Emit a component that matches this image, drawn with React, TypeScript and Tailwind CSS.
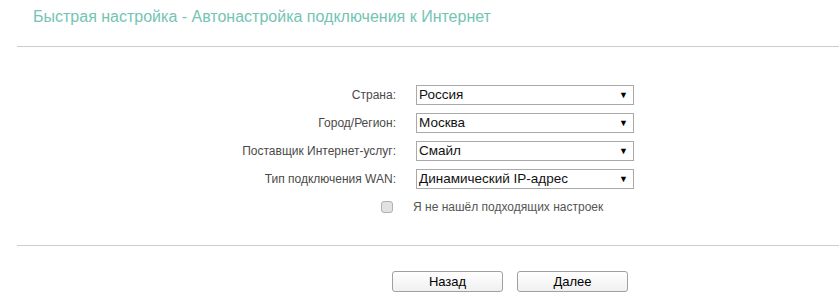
import React from "react";

const font = { fontFamily: '"Liberation Sans", Arial, sans-serif' };

function FakeSelect({ value }: { value: string }) {
  return (
    <div className="relative flex h-[20px] w-[218px] items-center border border-[#a9a9a9] bg-white pl-[2px] text-[13.5px] leading-none text-[#111]">
      <span>{value}</span>
      <span className="absolute right-[5px] top-[5px] text-[9px] leading-none text-black">▼</span>
    </div>
  );
}

const rows: [string, string][] = [
  ["Страна:", "Россия"],
  ["Город/Регион:", "Москва"],
  ["Поставщик Интернет-услуг:", "Смайл"],
  ["Тип подключения WAN:", "Динамический IP-адрес"],
];

export default function App() {
  return (
    <div className="h-[308px] w-full bg-white" style={font}>
      <div className="flex h-[46px] items-start pl-[33px] pt-[8px]">
        <h1 className="text-[16px] leading-[18px] font-normal text-[#74c4b3]">
          Быстрая настройка - Автонастройка подключения к Интернет
        </h1>
      </div>
      <div className="ml-[17px] border-t border-[#cccccc]" />
      <div className="grid grid-cols-[396px_218px] gap-x-[20px] gap-y-[8px] pt-[38px]">
        {rows.map(([label, value]) => (
          <React.Fragment key={label}>
            <div className="flex h-[20px] items-center justify-end text-[12px] text-[#4a4a4a]">
              {label}
            </div>
            <FakeSelect value={value} />
          </React.Fragment>
        ))}
        <div className="flex h-[20px] items-center justify-end pr-[3px]">
          <span className="block h-[12px] w-[12px] rounded-[3px] border border-[#b0b0b0] bg-[#e2e2e2]" />
        </div>
        <div className="-ml-[3px] flex h-[20px] items-center text-[12px] text-[#555]">
          Я не нашёл подходящих настроек
        </div>
      </div>
      <div className="ml-[17px] mt-[28px] border-t border-[#cccccc]" />
      <div className="flex gap-[14px] pl-[392px] pt-[25px]">
        <button className="h-[21px] w-[111px] rounded-[3px] border border-[#a0a0a0] bg-gradient-to-b from-white to-[#f0f0f0] text-[13px] leading-none text-black">
          Назад
        </button>
        <button className="h-[21px] w-[111px] rounded-[3px] border border-[#a0a0a0] bg-gradient-to-b from-white to-[#f0f0f0] text-[13px] leading-none text-black">
          Далее
        </button>
      </div>
    </div>
  );
}
